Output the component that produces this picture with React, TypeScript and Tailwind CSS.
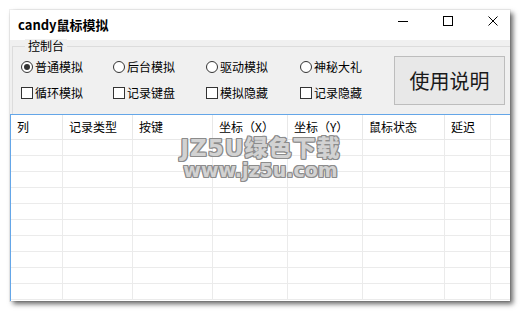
import React from "react";

const colW = ["w-[52px]", "w-[70px]", "w-[80px]", "w-[75px]", "w-[75px]", "w-[82px]", "w-[46px]", "flex-1"];
const headers = ["列", "记录类型", "按键", "坐标（X）", "坐标（Y）", "鼠标状态", "延迟", ""];
const radioW = ["w-[92px]", "w-[93px]", "w-[94px]", "w-[80px]"];

function Radio({ checked, label }: { checked?: boolean; label: string }) {
  return (
    <div className="flex items-center gap-[2px]">
      <div className="w-[12px] h-[12px] rounded-full border border-[#333] bg-white flex items-center justify-center">
        {checked && <div className="w-[6px] h-[6px] rounded-full bg-[#333]" />}
      </div>
      <span className="text-[12px] leading-[14px] text-black">{label}</span>
    </div>
  );
}

function Check({ label }: { label: string }) {
  return (
    <div className="flex items-center gap-[2px]">
      <div className="w-[12px] h-[12px] border border-[#333] bg-white" />
      <span className="text-[12px] leading-[14px] text-black">{label}</span>
    </div>
  );
}

export default function App() {
  const radios = [
    { label: "普通模拟", checked: true },
    { label: "后台模拟" },
    { label: "驱动模拟" },
    { label: "神秘大礼" },
  ];
  const checks = ["循环模拟", "记录键盘", "模拟隐藏", "记录隐藏"];
  return (
    <div
      className="w-[521px] h-[312px] bg-white pt-[10px] pl-[10px]"
      style={{ fontFamily: '"Noto Sans CJK SC", "Noto Sans", sans-serif' }}
    >
      <div className="w-[500px] h-[291px] bg-[#f0f0f0] flex flex-col overflow-hidden shadow-[0_0_0_1px_rgba(0,0,0,0.06),3px_3px_5px_rgba(0,0,0,0.6)]">
        {/* title bar */}
        <div className="h-[30px] bg-white flex items-center pl-[8px] pr-[12px] shrink-0">
          <span className="text-[13px] font-bold text-black">candy鼠标模拟</span>
          <div className="ml-auto self-start mt-[6px] flex items-center gap-[35px] h-[10px]">
            <div className="w-[10px] h-[1px] bg-black" />
            <div className="w-[10px] h-[10px] border border-black" />
            <svg width="10" height="10" viewBox="0 0 10 10">
              <path d="M0.5 0.5 L9.5 9.5 M9.5 0.5 L0.5 9.5" stroke="#000" strokeWidth="1" />
            </svg>
          </div>
        </div>

        {/* group box area */}
        <div className="h-[74px] shrink-0 flex flex-col">
          <div className="ml-[2px] mt-[6px] flex-1 border-t border-l border-[#dcdcdc] relative flex">
            <span className="absolute -top-[8px] left-[12px] px-[3px] bg-[#f0f0f0] text-[12px] leading-[14px] text-black">
              控制台
            </span>
            <div className="pt-[7px] pl-[8px] flex flex-col">
              <div className="h-[26px] flex items-center">
                {radios.map((r, i) => (
                  <div key={r.label} className={radioW[i]}>
                    <Radio label={r.label} checked={r.checked} />
                  </div>
                ))}
              </div>
              <div className="h-[26px] flex items-center">
                {checks.map((c, i) => (
                  <div key={c} className={radioW[i]}>
                    <Check label={c} />
                  </div>
                ))}
              </div>
            </div>
            <div className="ml-auto mr-[5px] mt-[9px] w-[111px] h-[49px] border border-[#bdbdbd] bg-[#e8e8e8] flex items-center justify-center">
              <span className="text-[20px] leading-[24px] text-[#1a1a1a]">使用说明</span>
            </div>
          </div>
        </div>

        {/* table */}
        <div className="flex-1 border-t border-l border-[#64a6e8] bg-white relative flex flex-col overflow-hidden">
          <div className="h-[25px] shrink-0 flex border-b border-[#e8e8e8]">
            {headers.map((h, i) => (
              <div
                key={i}
                className={`${colW[i]} ${i < 7 ? "border-r border-[#e8e8e8]" : ""} flex items-center pl-[6px] text-[12px] leading-[14px] text-black whitespace-nowrap`}
              >
                {h}
              </div>
            ))}
          </div>
          {Array.from({ length: 10 }).map((_, r) => (
            <div key={r} className="h-[16px] shrink-0 flex border-b border-[#ebebeb]">
              {colW.map((w, i) => (
                <div key={i} className={`${w} ${i < 7 ? "border-r border-[#ebebeb]" : ""}`} />
              ))}
            </div>
          ))}

          {/* watermark */}
          <div className="absolute top-[21px] left-0 right-0 flex flex-col items-center pointer-events-none">
            <div
              className="text-[23px] leading-[24px] font-black text-[#d2d2d2] tracking-[1px] [text-shadow:1px_0_#8c8c8c,-1px_0_#8c8c8c,0_1px_#8c8c8c,0_-1px_#8c8c8c,1px_1px_#8c8c8c,-1px_-1px_#8c8c8c,1px_-1px_#8c8c8c,-1px_1px_#8c8c8c]"
              style={{ fontFamily: '"DejaVu Sans", "Noto Sans CJK SC", sans-serif' }}
            >
              JZ5U绿色下载
            </div>
            <div
              className="mt-[1px] text-[19px] leading-[19px] font-bold text-[#d2d2d2] [text-shadow:1px_0_#8c8c8c,-1px_0_#8c8c8c,0_1px_#8c8c8c,0_-1px_#8c8c8c,1px_1px_#8c8c8c,-1px_-1px_#8c8c8c,1px_-1px_#8c8c8c,-1px_1px_#8c8c8c]"
              style={{ fontFamily: '"DejaVu Sans", sans-serif' }}
            >
              www.jz5u.com
            </div>
          </div>
        </div>
      </div>
    </div>
  );
}
